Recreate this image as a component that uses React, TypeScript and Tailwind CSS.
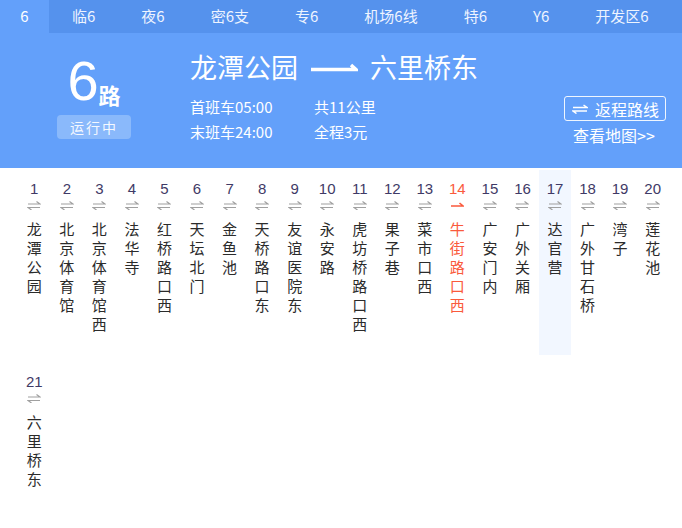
import React from 'react';

const tabs = ['6', '临6', '夜6', '密6支', '专6', '机场6线', '特6', 'Y6', '开发区6'];

const stops = [
  '龙潭公园', '北京体育馆', '北京体育馆西', '法华寺', '红桥路口西', '天坛北门', '金鱼池',
  '天桥路口东', '友谊医院东', '永安路', '虎坊桥路口西', '果子巷', '菜市口西', '牛街路口西',
  '广安门内', '广外关厢', '达官营', '广外甘石桥', '湾子', '莲花池', '六里桥东',
];

const CURRENT = 14; // bus is at this stop
const SELECTED = 17; // highlighted column

const font = { fontFamily: '"Noto Sans CJK SC", "Liberation Sans", sans-serif' };

// two harpoons, the "both ways" mark under each stop number
const BothWays = ({ color = '#a0a0a0' }: { color?: string }) => (
  <svg width="14" height="9" viewBox="0 0 14 9" fill="none" stroke={color} strokeWidth="1.2">
    <path d="M1 3h12L9.5 0.5" />
    <path d="M13 6.5H1l3.5 2.5" />
  </svg>
);

const OneWay = ({ color }: { color: string }) => (
  <svg width="14" height="9" viewBox="0 0 14 9" fill="none" stroke={color} strokeWidth="1.6">
    <path d="M1 5h12L9.5 2" />
  </svg>
);

const StopItem = ({ index, name }: { index: number; name: string }) => {
  const isCurrent = index === CURRENT;
  const isSelected = index === SELECTED;
  return (
    <div
      className={
        'flex w-[32.55px] h-[185px] mb-2 flex-col items-center ' +
        (isSelected ? 'bg-[#f2f7ff]' : '')
      }
    >
      <div
        className={
          'mt-[9px] h-[20px] text-[15px] leading-[20px] ' +
          (isCurrent ? 'text-[#fa5a3c]' : 'text-[#3f3a66]')
        }
        style={{ fontFamily: '"Liberation Sans", sans-serif' }}
      >
        {index}
      </div>
      <div className="mt-[2px] h-[9px] flex items-center">
        {isCurrent ? <OneWay color="#fa5a3c" /> : <BothWays />}
      </div>
      <div
        className={
          'mt-[9px] w-[16px] text-[15px] leading-[19px] text-center ' +
          (isCurrent ? 'text-[#fa5a3c]' : 'text-[#2b2b2b]')
        }
      >
        {name.split('').map((ch, i) => (
          <div key={i}>{ch}</div>
        ))}
      </div>
    </div>
  );
};

export default function App() {
  return (
    <div className="w-[682px] h-[528px] overflow-hidden bg-white" style={font}>
      {/* line tabs */}
      <div className="flex h-[33px] overflow-hidden bg-[#5592ed] text-[15px] text-[#eef4ff]">
        {tabs.map((t, i) =>
          i === 0 ? (
            <div key={t} className="flex w-[49px] shrink-0 items-center justify-center bg-[#63a0fa] text-white">
              {t}
            </div>
          ) : (
            <div key={t} className="flex shrink-0 items-center whitespace-nowrap px-[23px]">
              {t}
            </div>
          )
        )}
      </div>

      {/* line header */}
      <div className="flex h-[135px] bg-[#63a0fa] text-white">
        <div className="flex w-[190px] flex-col items-start pl-[57px] pt-[22px]">
          <div className="flex w-[74px] items-end justify-center">
            <span className="text-[56px] leading-[52px] font-light" style={{ fontFamily: '"Liberation Sans", sans-serif' }}>6</span>
            <span className="text-[22px] leading-[26px] font-bold">路</span>
          </div>
          <div className="mt-[8px] flex h-[24px] w-[74px] items-center justify-center rounded-sm bg-[#8ab9fb] text-[14px] tracking-[2px] text-[#f4f8ff]">
            运行中
          </div>
        </div>

        <div className="flex flex-1 flex-col pt-[15px]">
          <div className="flex h-[38px] items-center text-[27px]">
            <span>龙潭公园</span>
            <svg className="mx-[12px]" width="48" height="14" viewBox="0 0 48 14" fill="none" stroke="white" strokeWidth="3.5">
              <path d="M1 9.5h45L41 5" />
            </svg>
            <span>六里桥东</span>
          </div>
          <div className="mt-[8px] grid w-[220px] grid-cols-[124px_1fr] text-[15px] leading-[25px]">
            <span>首班车05:00</span>
            <span>共11公里</span>
            <span>末班车24:00</span>
            <span>全程3元</span>
          </div>
        </div>

        <div className="flex w-[118px] flex-col items-start pt-[63px]">
          <div className="flex h-[25px] w-[102px] items-center gap-[7px] rounded-[3px] border border-white/90 pl-[7px] text-[16px]">
            <svg width="16" height="10" viewBox="0 0 16 10" fill="none" stroke="white" strokeWidth="1.5">
              <path d="M1 3.5h14L11.5 1" />
              <path d="M15 7H1l3.5 2.5" />
            </svg>
            <span>返程路线</span>
          </div>
          <div className="mt-[3px] pl-[9px] text-[16px] leading-[22px]">查看地图&gt;&gt;</div>
        </div>
      </div>

      {/* stops */}
      <div className="flex flex-wrap pl-[18px] pt-[2px]">
        {stops.map((s, i) => (
          <StopItem key={i} index={i + 1} name={s} />
        ))}
      </div>
    </div>
  );
}
